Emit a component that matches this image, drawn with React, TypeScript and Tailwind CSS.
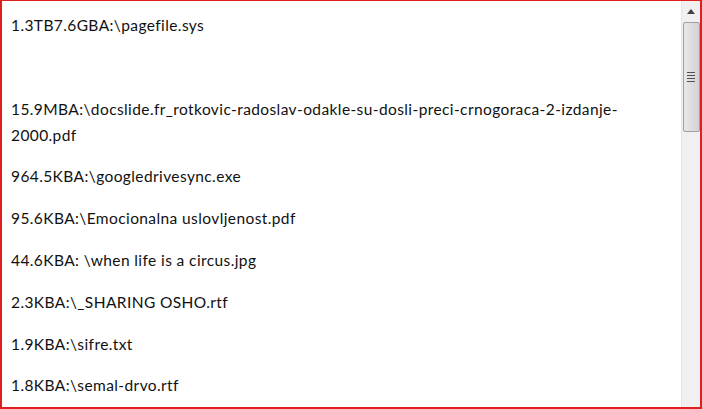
import React from "react";

const items: string[] = [
  "1.3TB7.6GBA:\\pagefile.sys",
  "",
  "15.9MBA:\\docslide.fr_rotkovic-radoslav-odakle-su-dosli-preci-crnogoraca-2-izdanje-2000.pdf",
  "964.5KBA:\\googledrivesync.exe",
  "95.6KBA:\\Emocionalna uslovljenost.pdf",
  "44.6KBA: \\when life is a circus.jpg",
  "2.3KBA:\\_SHARING OSHO.rtf",
  "1.9KBA:\\sifre.txt",
  "1.8KBA:\\semal-drvo.rtf",
];

export default function App() {
  return (
    <div className="w-[702px] h-[409px] bg-white border-[#e0201e] border-t border-l-2 border-r-2 border-b-2 flex overflow-hidden">
      <div
        className="flex-1 overflow-hidden pl-[9px] pr-[6px] pt-[11px] text-[#111] text-[15.5px] tracking-[0.4px] leading-[26px]"
        style={{ fontFamily: "Lato, 'Open Sans', sans-serif" }}
      >
        {items.map((it, i) => (
          <p key={i} className="mb-[15.8px] min-h-[26px]">
            {it}
          </p>
        ))}
      </div>
      <div className="w-[19px] h-full bg-[#f0f0f0] border-l border-[#e6e6e6] flex flex-col items-center">
        <div className="h-[20px] w-full flex items-center justify-center">
          <svg width="8" height="5" viewBox="0 0 8 5">
            <path d="M0 5 L4 0 L8 5 Z" fill="#404040" />
          </svg>
        </div>
        <div className="mt-[1px] w-[17px] h-[110px] rounded-[2px] border border-[#a0a0a0] bg-gradient-to-r from-[#e8e8e8] via-[#dedede] to-[#d2d2d2] flex flex-col items-center justify-center gap-[2px]">
          <div className="w-[8px] h-[1px] bg-[#505050]" />
          <div className="w-[8px] h-[1px] bg-[#505050]" />
          <div className="w-[8px] h-[1px] bg-[#505050]" />
          <div className="w-[8px] h-[1px] bg-[#505050]" />
        </div>
      </div>
    </div>
  );
}
